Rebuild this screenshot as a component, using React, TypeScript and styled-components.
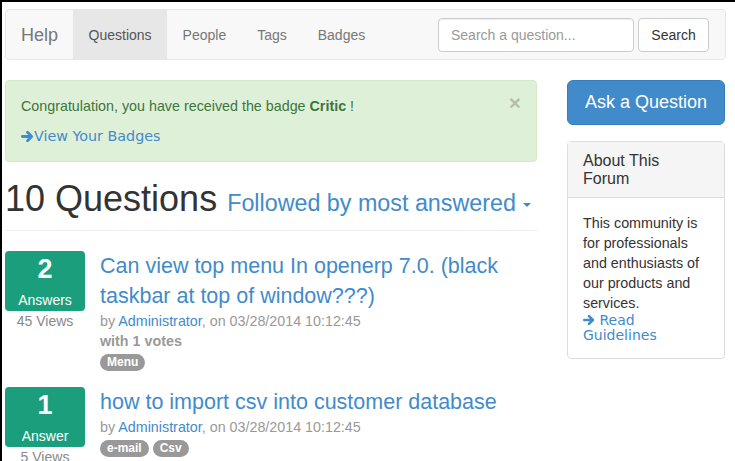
import React from 'react';
import styled, { createGlobalStyle } from 'styled-components';

const GlobalStyle = createGlobalStyle`
  html, body { margin: 0; padding: 0; background: #fff; }
  body {
    font-family: "Liberation Sans", Arial, Helvetica, sans-serif;
    font-size: 14.3px;
    line-height: 20px;
    color: #333;
  }
  * { box-sizing: border-box; }
`;

const Frame = styled.div`
  border-top: 2px solid #000;
  border-left: 2px solid #000;
  min-height: 461px;
  padding: 7px 0 0 3px;
  overflow: hidden;
`;

const Navbar = styled.nav`
  width: 721px;
  height: 51px;
  display: flex;
  align-items: stretch;
  background: #f8f8f8;
  border: 1px solid #e7e7e7;
  border-radius: 4px;
  padding-right: 16px;
`;

const Brand = styled.a`
  display: flex;
  align-items: center;
  padding: 0 15px;
  font-size: 18px;
  color: #777;
  text-decoration: none;
`;

const NavItem = styled.a<{ $active?: boolean }>`
  display: flex;
  align-items: center;
  padding: 0 15.5px;
  font-size: 14px;
  color: ${(p) => (p.$active ? '#555' : '#777')};
  background: ${(p) => (p.$active ? '#e7e7e7' : 'transparent')};
  text-decoration: none;
`;

const SearchForm = styled.form`
  margin-left: auto;
  display: flex;
  align-items: center;
  gap: 4px;
`;

const SearchInput = styled.input`
  width: 196px;
  height: 34px;
  padding: 6px 12px;
  border: 1px solid #ccc;
  border-radius: 4px;
  font-family: inherit;
  font-size: 14px;
  color: #555;
  background: #fff;
  box-shadow: inset 0 1px 1px rgba(0, 0, 0, 0.075);
  &::placeholder { color: #999; }
`;

const Button = styled.button`
  width: 71px;
  height: 34px;
  border: 1px solid #ccc;
  border-radius: 4px;
  background: #fff;
  font-family: inherit;
  font-size: 14px;
  color: #333;
  padding: 0;
`;

const Main = styled.div`
  display: flex;
  margin-top: 20px;
`;

const LeftCol = styled.div`
  width: 532px;
`;

const RightCol = styled.div`
  width: 158px;
  margin-left: 30px;
`;

const Alert = styled.div`
  position: relative;
  background: #dff0d8;
  border: 1px solid #d6e9c6;
  border-radius: 4px;
  color: #3c763d;
  padding: 15px;
`;

const Close = styled.span`
  position: absolute;
  right: 15px;
  top: 12px;
  font-size: 21px;
  font-weight: bold;
  line-height: 20px;
  color: #000;
  opacity: 0.2;
`;

const AlertLink = styled.a`
  display: flex;
  align-items: center;
  margin-top: 10px;
  font-family: "DejaVu Sans", Verdana, sans-serif;
  font-size: 14.3px;
  color: #428bca;
  text-decoration: none;
`;

const Heading = styled.h1`
  margin: 17px 0 0;
  padding-bottom: 7px;
  border-bottom: 1px solid #eee;
  font-size: 36px;
  font-weight: 500;
  line-height: 40px;
  color: #333;
  white-space: nowrap;
`;

const SortLink = styled.a`
  font-size: 23.3px;
  color: #428bca;
  text-decoration: none;
`;

const Caret = styled.span`
  display: inline-block;
  width: 0;
  height: 0;
  margin-left: 7px;
  vertical-align: middle;
  border-top: 4px solid #428bca;
  border-left: 4px solid transparent;
  border-right: 4px solid transparent;
`;

const QuestionRow = styled.div<{ $first?: boolean }>`
  display: flex;
  margin-top: ${(p) => (p.$first ? '20px' : '16px')};
`;

const StatCol = styled.div`
  width: 80px;
  flex-shrink: 0;
  text-align: center;
`;

const AnswerBox = styled.div`
  height: 60px;
  background: #1a9e7b;
  border-radius: 4px;
  color: #fff;
  padding-top: 3px;
`;

const AnswerCount = styled.div`
  font-size: 27px;
  font-weight: bold;
  line-height: 30px;
`;

const AnswerLabel = styled.div`
  margin-top: 6px;
  font-size: 14px;
  line-height: 20px;
`;

const Views = styled.div`
  color: #888;
  font-size: 14px;
  line-height: 20px;
`;

const QuestionBody = styled.div`
  margin-left: 15px;
`;

const QuestionTitle = styled.a`
  display: block;
  font-size: 21.5px;
  line-height: 30px;
  color: #428bca;
  text-decoration: none;
`;

const Meta = styled.div`
  color: #999;
  line-height: 20px;
`;

const MetaLink = styled.a`
  color: #428bca;
  text-decoration: none;
`;

const Votes = styled.div`
  color: #999;
  font-weight: bold;
  line-height: 20px;
`;

const Tags = styled.div`
  display: flex;
  gap: 4px;
  margin-top: 3px;
`;

const Badge = styled.span`
  display: inline-block;
  padding: 3px 7px;
  font-size: 12px;
  font-weight: bold;
  line-height: 11px;
  color: #fff;
  background: #999;
  border-radius: 10px;
`;

const AskButton = styled.a`
  display: block;
  height: 45px;
  line-height: 43px;
  text-align: center;
  font-size: 18px;
  color: #fff;
  background: #428bca;
  border: 1px solid #357ebd;
  border-radius: 6px;
  text-decoration: none;
`;

const Panel = styled.div`
  margin-top: 16px;
  border: 1px solid #ddd;
  border-radius: 4px;
`;

const PanelHeading = styled.div`
  background: #f5f5f5;
  border-bottom: 1px solid #ddd;
  padding: 10px 15px;
`;

const PanelTitle = styled.h3`
  margin: 0;
  font-size: 16px;
  font-weight: 500;
  line-height: 17.6px;
  color: #333;
`;

const PanelBody = styled.div`
  padding: 15px;
  line-height: 20px;
`;

const GuideLink = styled.a`
  display: block;
  font-family: "DejaVu Sans", Verdana, sans-serif;
  font-size: 14px;
  line-height: 15px;
  color: #428bca;
  text-decoration: none;
`;

const ArrowIcon: React.FC<{ size?: number }> = ({ size = 12 }) => (
  <svg width={size} height={size} viewBox="0 0 14 14" style={{ verticalAlign: '-1px' }}>
    <path
      d="M1.5 7h9.5M7 2.5l4.5 4.5-4.5 4.5"
      fill="none"
      stroke="#428bca"
      strokeWidth="3"
      strokeLinecap="round"
      strokeLinejoin="round"
    />
  </svg>
);

const questions = [
  {
    count: 2,
    label: 'Answers',
    views: '45 Views',
    title: 'Can view top menu In openerp 7.0. (black taskbar at top of window???)',
    votes: 'with 1 votes',
    tags: ['Menu'],
  },
  {
    count: 1,
    label: 'Answer',
    views: '5 Views',
    title: 'how to import csv into customer database',
    votes: '',
    tags: ['e-mail', 'Csv'],
  },
];

export default function App() {
  return (
    <>
      <GlobalStyle />
      <Frame>
        <Navbar>
          <Brand>Help</Brand>
          <NavItem $active>Questions</NavItem>
          <NavItem>People</NavItem>
          <NavItem>Tags</NavItem>
          <NavItem>Badges</NavItem>
          <SearchForm onSubmit={(e) => e.preventDefault()}>
            <SearchInput placeholder="Search a question..." />
            <Button type="submit">Search</Button>
          </SearchForm>
        </Navbar>
        <Main>
          <LeftCol>
            <Alert>
              <Close>×</Close>
              <div>
                Congratulation, you have received the badge <b>Critic</b> !
              </div>
              <AlertLink>
                <ArrowIcon size={13} />
                View Your Badges
              </AlertLink>
            </Alert>
            <Heading>
              10 Questions{' '}
              <SortLink>
                Followed by most answered
                <Caret />
              </SortLink>
            </Heading>
            {questions.map((q, i) => (
              <QuestionRow key={i} $first={i === 0}>
                <StatCol>
                  <AnswerBox>
                    <AnswerCount>{q.count}</AnswerCount>
                    <AnswerLabel>{q.label}</AnswerLabel>
                  </AnswerBox>
                  <Views>{q.views}</Views>
                </StatCol>
                <QuestionBody>
                  <QuestionTitle>{q.title}</QuestionTitle>
                  <Meta>
                    by <MetaLink>Administrator</MetaLink>, on 03/28/2014 10:12:45
                  </Meta>
                  {q.votes && <Votes>{q.votes}</Votes>}
                  <Tags>
                    {q.tags.map((t) => (
                      <Badge key={t}>{t}</Badge>
                    ))}
                  </Tags>
                </QuestionBody>
              </QuestionRow>
            ))}
          </LeftCol>
          <RightCol>
            <AskButton>Ask a Question</AskButton>
            <Panel>
              <PanelHeading>
                <PanelTitle>About This Forum</PanelTitle>
              </PanelHeading>
              <PanelBody>
                This community is for professionals and enthusiasts of our products and services.
                <GuideLink>
                  <ArrowIcon /> Read Guidelines
                </GuideLink>
              </PanelBody>
            </Panel>
          </RightCol>
        </Main>
      </Frame>
    </>
  );
}
